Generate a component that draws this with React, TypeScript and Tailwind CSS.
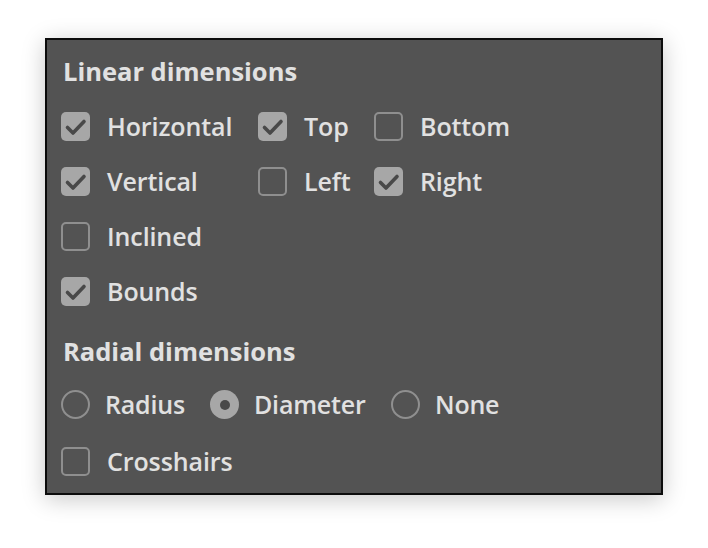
import React from 'react';

const font = {fontFamily: '"Open Sans", "Noto Sans", sans-serif'};

function Check({checked, label}: {checked?: boolean; label: string}) {
  return (
    <div className="flex items-center h-[55px]">
      {checked ? (
        <span className="shrink-0 w-[29px] h-[29px] rounded-[5px] bg-[#a7a7a7]">
          <svg width="29" height="29" viewBox="0 0 29 29" fill="none">
            <path d="M6.5 15.5 L12 21 L23 9.5" stroke="#494949" strokeWidth="3.6" strokeLinecap="round" strokeLinejoin="round" />
          </svg>
        </span>
      ) : (
        <span className="shrink-0 w-[29px] h-[29px] rounded-[5px] border-2 border-[#8f8f8f]" />
      )}
      <span className="ml-[17px] text-[25px] font-semibold tracking-[-0.1px] text-[#e1e1e1]">{label}</span>
    </div>
  );
}

function Radio({checked, label}: {checked?: boolean; label: string}) {
  return (
    <div className="flex items-center h-[55px]">
      {checked ? (
        <span className="shrink-0 w-[29px] h-[29px] rounded-full bg-[#a7a7a7] flex items-center justify-center">
          <span className="w-[10px] h-[10px] rounded-full bg-[#494949]" />
        </span>
      ) : (
        <span className="shrink-0 w-[29px] h-[29px] rounded-full border-2 border-[#8f8f8f]" />
      )}
      <span className="ml-[15px] text-[25px] font-semibold tracking-[-0.2px] text-[#e1e1e1]">{label}</span>
    </div>
  );
}

export default function App() {
  return (
    <div className="w-[708px] h-[548px] bg-white pt-[38px] pl-[45px]" style={font}>
      <div className="w-[618px] h-[457px] bg-[#535353] border-2 border-[#0c0c0c] shadow-[0_4px_22px_rgba(0,0,0,0.22)] pl-[14px] pt-[12px]">
        <h2 className="text-[25.5px] font-bold text-[#e1e1e1] leading-[38px] pl-[2px] mb-[9px]">Linear dimensions</h2>
        <div className="grid grid-cols-[197px_116px_auto]">
          <Check checked label="Horizontal" />
          <Check checked label="Top" />
          <Check label="Bottom" />
          <Check checked label="Vertical" />
          <Check label="Left" />
          <Check checked label="Right" />
        </div>
        <Check label="Inclined" />
        <Check checked label="Bounds" />
        <h2 className="text-[25.5px] font-bold text-[#e1e1e1] leading-[38px] pl-[2px] mt-[13px] mb-[7px]">Radial dimensions</h2>
        <div className="flex">
          <div className="w-[149px]"><Radio label="Radius" /></div>
          <div className="w-[181px]"><Radio checked label="Diameter" /></div>
          <Radio label="None" />
        </div>
        <div className="mt-[2px]"><Check label="Crosshairs" /></div>
      </div>
    </div>
  );
}
